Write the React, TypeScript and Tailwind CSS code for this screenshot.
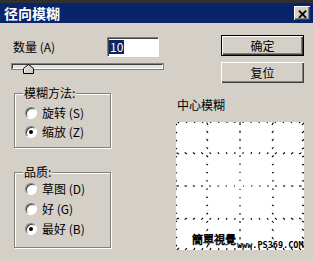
import React from 'react';

const font = { fontFamily: '"Noto Sans CJK SC", "Noto Sans", sans-serif' };

// classic sunken radio button
const Radio: React.FC<{ checked?: boolean; label: string }> = ({ checked, label }) => (
  <div className="flex h-[19px] items-center pl-[10px]">
    <span className="flex h-3 w-3 items-center justify-center rounded-full border border-t-[#808080] border-l-[#808080] border-b-white border-r-white bg-white shadow-[inset_1px_1px_0_#404040]">
      {checked && <span className="h-1 w-1 rounded-full bg-black" />}
    </span>
    <span className="ml-[5px] text-[12px] leading-[14px] text-black">{label}</span>
  </div>
);

const GroupBox: React.FC<{ title: string; className: string; children: React.ReactNode }> = ({ title, className, children }) => (
  <div className={`relative ml-[2px] w-[97px] border border-[#808080] shadow-[inset_1px_1px_0_#fff,1px_1px_0_#fff] ${className}`}>
    <span className="absolute left-[8px] top-[-8px] bg-[#d4d0c8] px-[1px] text-[12px] leading-[14px] text-black">{title}</span>
    {children}
  </div>
);

const Button: React.FC<{ label: string; isDefault?: boolean; className?: string }> = ({ label, isDefault, className }) => (
  <div
    className={`ml-[45px] flex h-[21px] w-[83px] items-center justify-center bg-[#d4d0c8] text-[12px] text-black ${
      isDefault
        ? 'border border-black shadow-[inset_1px_1px_0_#fff,inset_-1px_-1px_0_#404040,inset_-2px_-2px_0_#808080]'
        : 'shadow-[inset_1px_1px_0_#fff,inset_-1px_-1px_0_#404040,inset_-2px_-2px_0_#808080]'
    } ${className ?? ''}`}
  >
    {label}
  </div>
);

// radial-blur preview: grid of short ticks pointing at the centre
const Preview: React.FC = () => {
  const lines = [1, 32, 64, 96, 126];
  const ticks: { x1: number; y1: number; x2: number; y2: number }[] = [];
  for (const p of lines) {
    for (let t = 3; t < 128; t += 8) {
      for (const [x, y] of [[p, t], [t, p]]) {
        const dx = x - 64;
        const dy = y - 64;
        const d = Math.hypot(dx, dy) || 1;
        const len = 1 + (d / 90) * 2.5;
        ticks.push({ x1: x, y1: y, x2: x + (dx / d) * len, y2: y + (dy / d) * len });
      }
    }
  }
  const noise: [number, number][] = [];
  let s = 7;
  for (let i = 0; i < 500; i++) {
    s = (s * 1103515245 + 12345) % 2147483648;
    const x = s % 128;
    s = (s * 1103515245 + 12345) % 2147483648;
    noise.push([x, s % 128]);
  }
  return (
    <svg width="128" height="128" viewBox="0 0 128 128" className="mt-[10px] block">
      <rect width="128" height="128" fill="#ffffff" />
      {noise.map(([x, y], i) => (
        <rect key={i} x={x} y={y} width="1" height="1" fill="#d8d8d8" />
      ))}
      {ticks.map((k, i) => (
        <line key={i} x1={k.x1} y1={k.y1} x2={k.x2} y2={k.y2} stroke="#000" strokeWidth="1.1" />
      ))}
      <text x="16" y="122" fontSize="11" fontFamily='"Noto Sans CJK TC", sans-serif' fill="#fff" stroke="#000" strokeWidth="0.7">
        簡單視覺
      </text>
      <text x="61" y="126" fontSize="8.5" fontFamily='"DejaVu Sans Mono", monospace' fontWeight="bold" fill="#000">
        www.PS369.COM
      </text>
    </svg>
  );
};

export default function App() {
  return (
    <div className="h-[261px] w-[313px] overflow-hidden bg-[#d4d0c8]" style={font}>
      <div className="h-[3px] bg-[#303030]" />
      <div className="flex h-[20px] items-center justify-between bg-[#0a246a] pl-[4px] pr-[3px]">
        <span className="text-[14px] font-bold leading-none text-white">径向模糊</span>
        <span className="flex h-[14px] w-[16px] items-center justify-center bg-[#d4d0c8] text-[13px] font-bold leading-none text-black shadow-[inset_1px_1px_0_#fff,inset_-1px_-1px_0_#404040,inset_-2px_-2px_0_#808080]">
          ✕
        </span>
      </div>

      <div className="flex">
        {/* left column */}
        <div className="w-[176px] pl-[12px]">
          <div className="mt-[14px] flex h-[20px] items-center">
            <span className="ml-[1px] text-[12px] text-black">数量 (A)</span>
            <div className="ml-[52px] flex h-[20px] w-[52px] items-center border border-t-[#808080] border-l-[#808080] border-b-white border-r-white bg-white pl-[1px] shadow-[inset_1px_1px_0_#404040]">
              <span className="bg-[#0a246a] px-[1px] text-[12px] leading-[14px] text-white">10</span>
            </div>
          </div>
          <div className="relative mt-[7px] h-[10px]">
            <div className="h-[5px] w-[151px] border border-t-[#404040] border-l-[#404040] border-b-white border-r-white bg-[#e4e2dc] shadow-[0_0_0_1px_#808080]" />
            <svg width="11" height="10" viewBox="0 0 11 10" className="absolute left-[11px] top-[0px]">
              <path d="M0.5 9.5 V4.5 L5.5 0.5 L10.5 4.5 V9.5 Z" fill="#d4d0c8" stroke="#000" />
              <path d="M1.5 8.5 V5 L5.5 1.8" fill="none" stroke="#fff" />
            </svg>
          </div>
          <GroupBox title="模糊方法:" className="mt-[19px] h-[55px] pt-[9px]">
            <Radio label="旋转 (S)" />
            <Radio label="缩放 (Z)" checked />
          </GroupBox>
          <GroupBox title="品质:" className="mt-[24px] h-[76px] pt-[6px]">
            <div className="flex flex-col gap-[1px]">
              <Radio label="草图 (D)" />
              <Radio label="好 (G)" />
              <Radio label="最好 (B)" checked />
            </div>
          </GroupBox>
        </div>

        {/* right column */}
        <div className="flex-1">
          <Button label="确定" isDefault className="mt-[12px]" />
          <Button label="复位" className="mt-[6px]" />
          <div className="ml-[1px] mt-[15px] text-[12px] leading-[14px] text-black">中心模糊</div>
          <Preview />
        </div>
      </div>
    </div>
  );
}
